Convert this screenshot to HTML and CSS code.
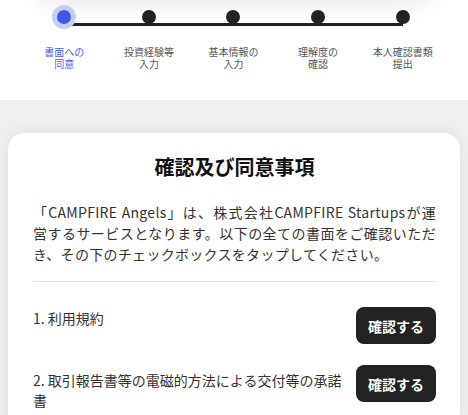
FILE: index.html
```html
<!DOCTYPE html>
<html lang="ja">
<head>
<meta charset="utf-8">
<link rel="stylesheet" href="styles.css">
</head>
<body>
<div class="top">
  <div class="top-shadow"></div>
  <ol class="steps">
    <li class="step active"><span class="dot"></span><span class="label"><span class="ln">書面への</span><span class="ln">同意</span></span></li>
    <li class="step"><span class="dot"></span><span class="label"><span class="ln">投資経験等</span><span class="ln">入力</span></span></li>
    <li class="step"><span class="dot"></span><span class="label"><span class="ln">基本情報の</span><span class="ln">入力</span></span></li>
    <li class="step"><span class="dot"></span><span class="label"><span class="ln">理解度の</span><span class="ln">確認</span></span></li>
    <li class="step"><span class="dot"></span><span class="label"><span class="ln">本人確認書類</span><span class="ln">提出</span></span></li>
  </ol>
</div>
<main class="main">
  <section class="card">
    <h1 class="title">確認及び同意事項</h1>
    <p class="intro">「CAMPFIRE Angels」は、株式会社CAMPFIRE Startupsが運営するサービスとなります。以下の全ての書面をご確認いただき、その下のチェックボックスをタップしてください。</p>
    <hr class="divider">
    <div class="doc">
      <span class="doc-name">1. 利用規約</span>
      <button class="btn">確認する</button>
    </div>
    <div class="doc">
      <span class="doc-name">2. 取引報告書等の電磁的方法による交付等の承諾書</span>
      <button class="btn">確認する</button>
    </div>
  </section>
</main>
</body>
</html>
```
FILE: styles.css
```css
* { box-sizing: border-box; }
html, body {
  margin: 0;
  padding: 0;
}
body {
  background: #f0f0f0;
  color: #222;
  font-family: "Noto Sans CJK JP", "Noto Sans", sans-serif;
  overflow: hidden;
}
.top {
  background: #fff;
  height: 100px;
  overflow: hidden;
}
.top-shadow {
  height: 20px;
  margin: -20px 34px 0;
  border-radius: 0 0 60px 60px;
  box-shadow: 0 0 26px rgba(0, 0, 0, 0.13);
}
.steps {
  list-style: none;
  margin: 0;
  padding: 5px 23px 0 22px;
  display: grid;
  grid-template-columns: repeat(5, 1fr);
}
.step {
  position: relative;
  display: flex;
  flex-direction: column;
  align-items: center;
}
.step::before {
  content: "";
  position: absolute;
  top: 18px;
  left: 50%;
  width: 100%;
  height: 3px;
  background: #222;
}
.step:last-child::before { display: none; }
.dot {
  position: relative;
  width: 24px;
  height: 24px;
  border-radius: 50%;
  display: flex;
  align-items: center;
  justify-content: center;
}
.dot::after {
  content: "";
  width: 14px;
  height: 14px;
  border-radius: 50%;
  background: #222;
}
.active .dot {
  background: #c8cff6;
}
.active .dot::after {
  background: #4059e3;
}
.label {
  margin-top: 17px;
  display: flex;
  flex-direction: column;
  align-items: center;
  gap: 0;
  font-size: 10px;
  text-align: center;
  color: #555;
}
.ln {
  display: block;
  line-height: 12px;
  height: 12px;
}
.active .label { color: #4a5ee6; }

.main {
  padding: 33px 8px 0;
}
.card {
  background: #fff;
  border-radius: 16px;
  box-shadow: 0 0 14px rgba(0, 0, 0, 0.08);
  padding: 20px 24px 24px 25px;
}
.title {
  margin: 0;
  font-size: 20px;
  line-height: 28px;
  font-weight: 700;
  text-align: center;
  color: #111;
}
.intro {
  margin: 21px 0 0;
  font-size: 14px;
  line-height: 21px;
  letter-spacing: 0.3px;
  text-align: justify;
  color: #333;
}
.divider {
  border: 0;
  border-top: 1px solid #e3e3e3;
  margin: 16px 0 0;
}
.doc {
  display: flex;
  align-items: flex-start;
  justify-content: space-between;
  gap: 10px;
  margin-top: 25px;
}
.doc + .doc { margin-top: 21px; }
.doc-name {
  font-size: 14px;
  line-height: 20px;
  color: #333;
  padding-top: 1px;
}
.doc + .doc .doc-name { padding-top: 5px; }
.btn {
  flex: none;
  width: 80px;
  height: 37px;
  border: 0;
  border-radius: 8px;
  background: #222;
  color: #fff;
  font-family: inherit;
  font-size: 14px;
  font-weight: 700;
  padding: 0;
}
```
